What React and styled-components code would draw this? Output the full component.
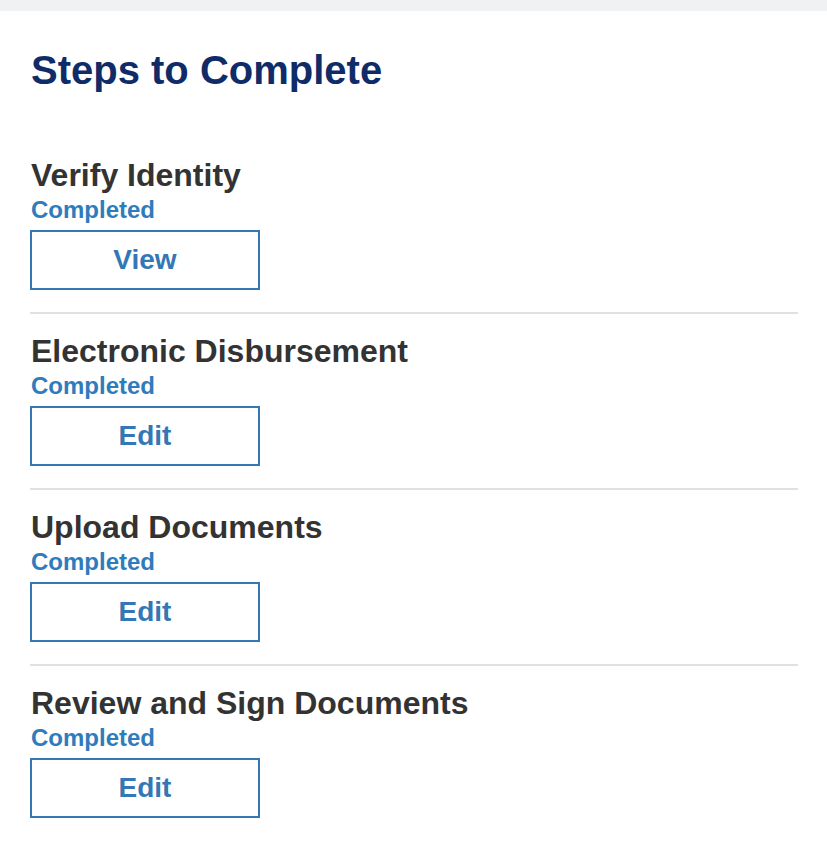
import React from "react";
import styled, { createGlobalStyle } from "styled-components";

const GlobalStyle = createGlobalStyle`
  html, body {
    margin: 0;
    padding: 0;
    background: #ffffff;
    font-family: "Liberation Sans", Arial, sans-serif;
  }
`;

const TopBar = styled.div`
  height: 11px;
  background: #f0f1f3;
`;

const Page = styled.div`
  padding: 0 29px 0 30px;
`;

const Heading = styled.h1`
  margin: 0;
  padding: 36px 0 65px 1px;
  font-size: 40px;
  line-height: 46px;
  font-weight: 700;
  color: #0f2c68;
`;

const StepList = styled.div`
  display: flex;
  flex-direction: column;
`;

const Step = styled.section`
  display: flex;
  flex-direction: column;
  align-items: flex-start;
  padding: 0 0 22px;
  margin-bottom: 20px;
  border-bottom: ${(p) => (p.last ? "none" : "2px solid #e1e1e1")};
`;

const StepTitle = styled.h2`
  margin: 0;
  padding-left: 1px;
  font-size: 32px;
  line-height: 34px;
  font-weight: 700;
  color: #333333;
`;

const Status = styled.div`
  margin-top: 5px;
  padding-left: 1px;
  font-size: 24px;
  line-height: 26px;
  font-weight: 700;
  color: #2f7cbd;
`;

const ActionButton = styled.button`
  margin-top: 7px;
  width: 230px;
  height: 60px;
  border: 2px solid #3477b4;
  background: #ffffff;
  color: #3477b4;
  font-family: "Liberation Sans", Arial, sans-serif;
  font-size: 28px;
  font-weight: 700;
  cursor: pointer;
`;

const steps = [
  { title: "Verify Identity", status: "Completed", action: "View" },
  { title: "Electronic Disbursement", status: "Completed", action: "Edit" },
  { title: "Upload Documents", status: "Completed", action: "Edit" },
  { title: "Review and Sign Documents", status: "Completed", action: "Edit" },
];

export default function App() {
  return (
    <>
      <GlobalStyle />
      <TopBar />
      <Page>
        <Heading>Steps to Complete</Heading>
        <StepList>
          {steps.map((s, i) => (
            <Step key={s.title} last={i === steps.length - 1}>
              <StepTitle>{s.title}</StepTitle>
              <Status>{s.status}</Status>
              <ActionButton>{s.action}</ActionButton>
            </Step>
          ))}
        </StepList>
      </Page>
    </>
  );
}
